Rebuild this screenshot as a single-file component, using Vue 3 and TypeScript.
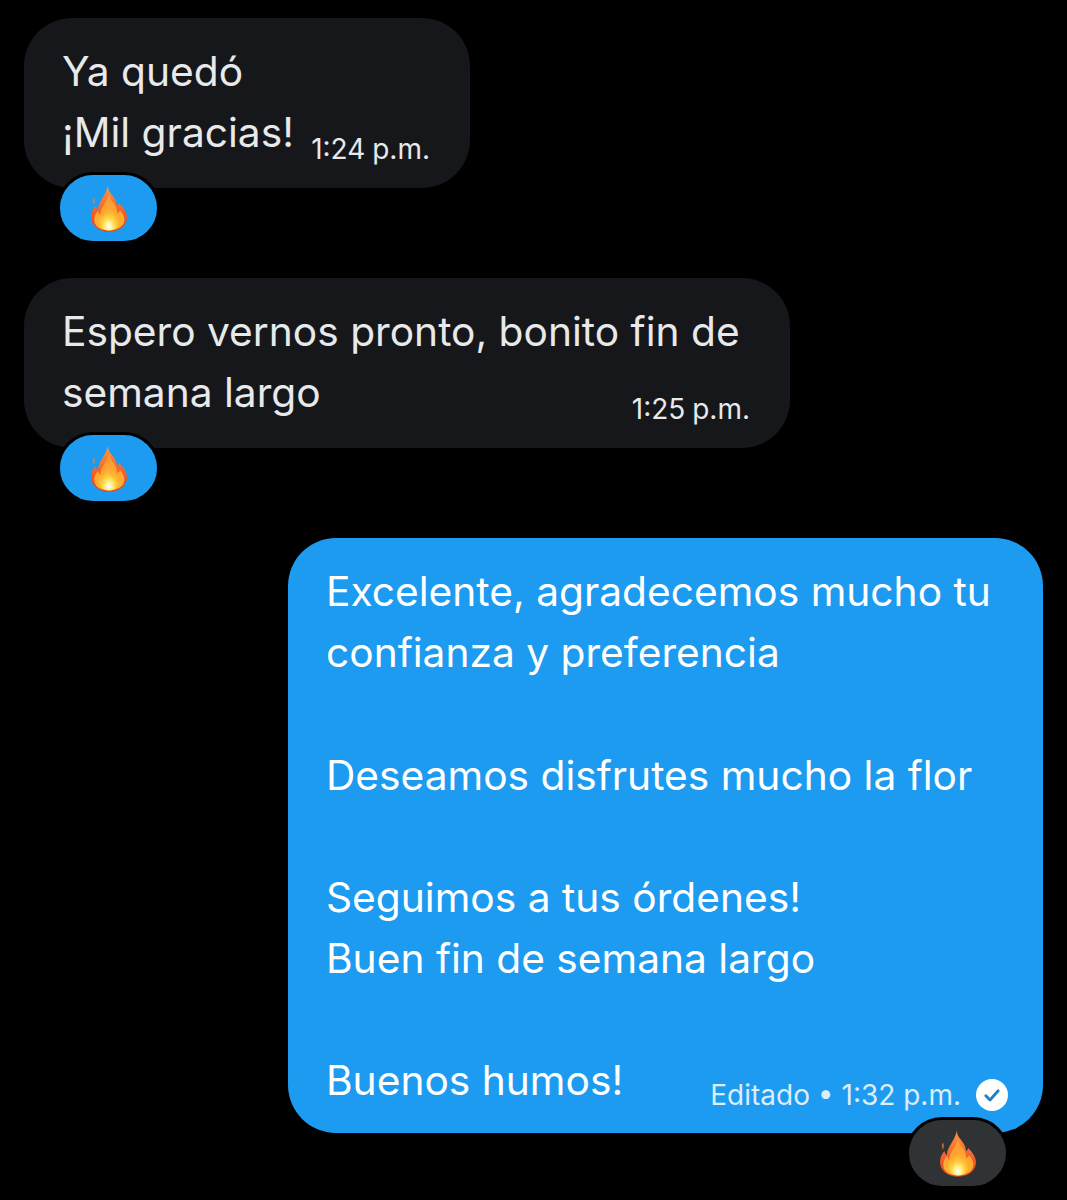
<script setup lang="ts">
interface Message {
  id: string
  mine: boolean
  lines: string[]
  last: string
  meta: string
  checked: boolean
}

const messages: Message[] = [
  { id: 'a', mine: false, lines: ['Ya quedó'], last: '¡Mil gracias!', meta: '1:24 p.m.', checked: false },
  { id: 'b', mine: false, lines: ['Espero vernos pronto, bonito fin de'], last: 'semana largo', meta: '1:25 p.m.', checked: false },
  {
    id: 'c',
    mine: true,
    lines: [
      'Excelente, agradecemos mucho tu',
      'confianza y preferencia',
      '',
      'Deseamos disfrutes mucho la flor',
      '',
      'Seguimos a tus órdenes!',
      'Buen fin de semana largo',
      '',
    ],
    last: 'Buenos humos!',
    meta: 'Editado • 1:32 p.m.',
    checked: true,
  },
]
</script>

<template>
  <main class="thread">
    <section v-for="m in messages" :key="m.id" class="message" :class="[`message-${m.id}`, { mine: m.mine }]">
      <div class="bubble">
        <div v-for="(line, i) in m.lines" :key="i" class="line">{{ line || '\u00a0' }}</div>
        <div class="last-row">
          <span class="line">{{ m.last }}</span>
          <span class="meta">
            <span>{{ m.meta }}</span>
            <svg v-if="m.checked" class="check" viewBox="0 0 32 32" aria-hidden="true">
              <circle cx="16" cy="16" r="16" fill="#fff" />
              <path d="M9.8 16.8l4.2 4.2 8.2-9.2" fill="none" stroke="#1d7fc4" stroke-width="2.8" stroke-linecap="round" stroke-linejoin="round" />
            </svg>
          </span>
        </div>
      </div>
      <div class="reaction">
        <svg class="flame" viewBox="0 0 110 142" aria-hidden="true">
          <defs>
            <linearGradient :id="`outer-${m.id}`" x1="0" y1="0" x2="0" y2="1">
              <stop offset="0" stop-color="#fb9a3a" />
              <stop offset="0.5" stop-color="#f4682c" />
              <stop offset="1" stop-color="#e53f1e" />
            </linearGradient>
            <linearGradient :id="`middle-${m.id}`" x1="0" y1="0" x2="0" y2="1">
              <stop offset="0" stop-color="#fd9a38" />
              <stop offset="1" stop-color="#ffb02c" />
            </linearGradient>
            <radialGradient :id="`glow-${m.id}`" cx="0.5" cy="0.86" r="0.68">
              <stop offset="0" stop-color="#ffffff" />
              <stop offset="0.2" stop-color="#fff4a0" />
              <stop offset="0.5" stop-color="#ffd035" />
              <stop offset="1" stop-color="#ffac2c" stop-opacity="0" />
            </radialGradient>
          </defs>
          <path d="M6 42c-1 8 0 13 3 17 3-5 4-12 2-20-2 0-4 1-5 3z" fill="#f47a36" opacity=".7" />
          <path :fill="`url(#outer-${m.id})`" d="M52 0c-1 15 6 21 17 36 7 9 10 18 11 29 3-3 5-7 6-11 14 14 24 29 24 44 0 24-22 44-55 44S0 122 0 97c0-15 6-26 14-34 1 6 3 10 7 13 0-26 24-42 31-76z" />
          <path :fill="`url(#middle-${m.id})`" d="M56 26c2 16 11 24 18 36 3 6 6 14 6 23 4-2 7-5 9-9 8 9 13 19 13 29 0 20-21 33-47 33S10 126 10 105c0-10 5-20 12-26 1 5 3 9 6 12 1-24 21-39 28-65z" />
          <path :fill="`url(#glow-${m.id})`" d="M56 50c2 16 13 26 21 37 6 8 10 15 10 23 0 17-14 28-32 28s-33-11-33-28c0-9 5-17 12-23 1 4 3 6 5 8 3-15 14-27 17-45z" />
        </svg>
      </div>
    </section>
  </main>
</template>

<style scoped>
.thread {
  width: 1067px;
  height: 1200px;
  box-sizing: border-box;
  padding: 18px 24px 0;
  background: #000;
  overflow: hidden;
  font-family: Inter, "Liberation Sans", sans-serif;
  color: #e7e9ea;
}

.message {
  display: flex;
  flex-direction: column;
  align-items: flex-start;
  margin-bottom: 34px;
}

.message.mine {
  align-items: flex-end;
}

.bubble {
  box-sizing: border-box;
  padding: 23px 40px 25px 38px;
  border-radius: 48px;
  background: #16171a;
  font-size: 40.7px;
  line-height: 61.1px;
}

.message-a .bubble {
  width: 446px;
}

.message-b .bubble {
  width: 766px;
}

.message-c .bubble {
  width: 755px;
  padding-bottom: 22px;
  padding-right: 35px;
  background: #1d9bf0;
  color: #fff;
}

.line {
  white-space: nowrap;
}

.last-row {
  display: flex;
  align-items: flex-end;
  justify-content: space-between;
}

.meta {
  display: flex;
  align-items: center;
  gap: 15px;
  font-size: 28px;
  line-height: 40px;
  margin-bottom: -6px;
  white-space: nowrap;
  word-spacing: -1px;
}

.message-c .meta {
  color: #dcedfb;
  margin-bottom: -4px;
  word-spacing: 0;
}

.check {
  width: 32px;
  height: 32px;
  flex: none;
}

.reaction {
  box-sizing: border-box;
  display: flex;
  align-items: center;
  justify-content: center;
  width: 103px;
  height: 72px;
  margin: -16px 0 0 33px;
  position: relative;
  border: 3px solid #000;
  border-radius: 36px;
  background: #1d9bf0;
}

.message-c .reaction {
  margin: -16px 34px 0 0;
  background: #2f3336;
}

.flame {
  width: 36px;
  height: 47px;
}
</style>
